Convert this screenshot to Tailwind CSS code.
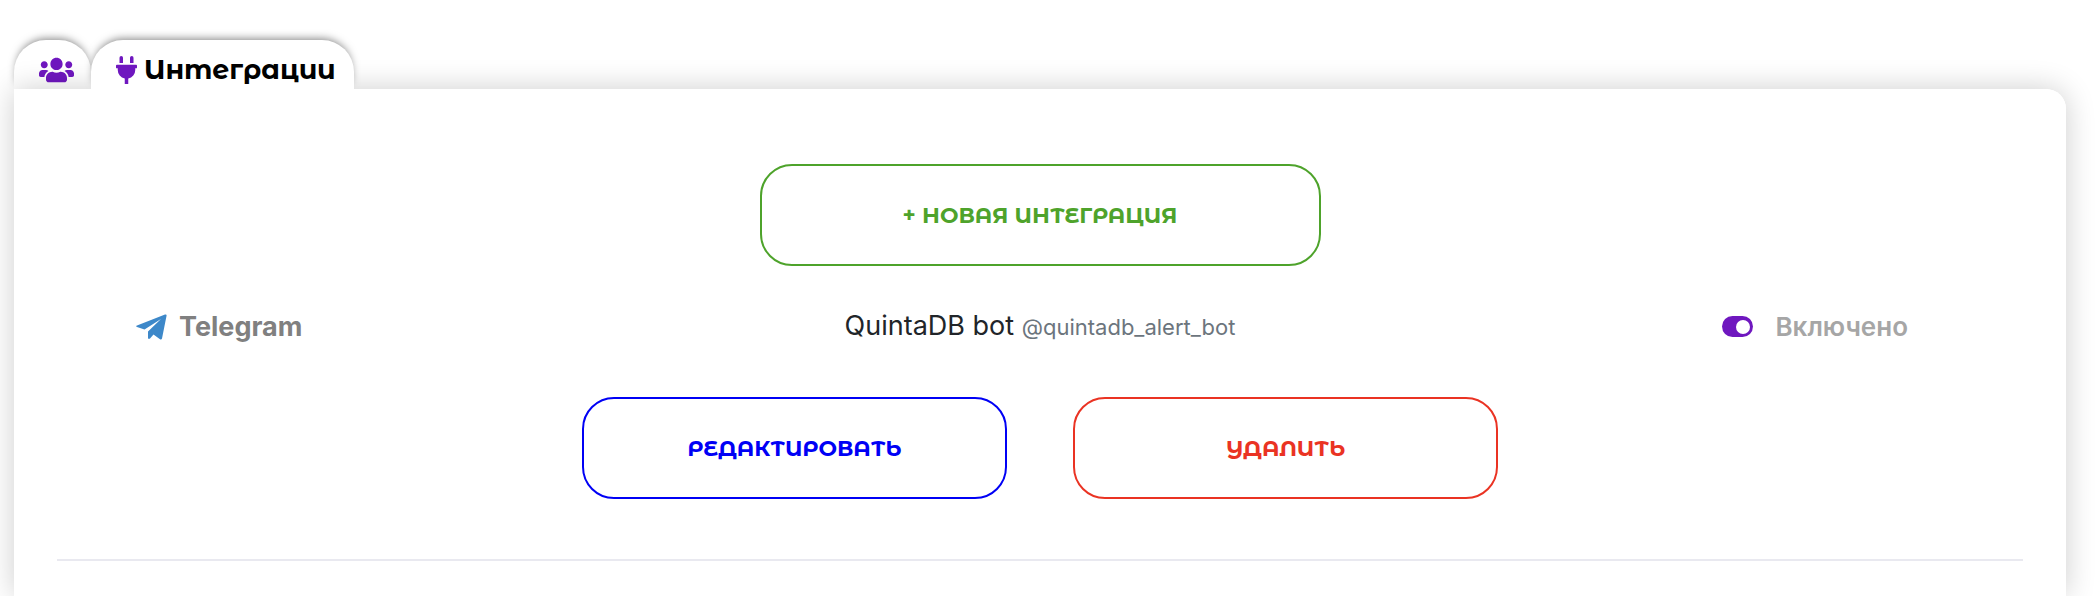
<!DOCTYPE html>
<html lang="ru">
<head>
  <meta charset="UTF-8" />
  <meta name="viewport" content="width=device-width, initial-scale=1.0" />
  <title>Интеграции</title>
  <script src="https://cdn.jsdelivr.net/npm/@tailwindcss/browser@4"></script>
</head>
<body class="bg-white font-['Inter','Liberation_Sans',sans-serif] text-[#212529]">

  <div class="min-h-screen flex flex-col pl-3.5 pr-8 pt-10 overflow-hidden">

    <nav class="flex h-[49px]">
      <a href="#users" aria-label="Пользователи" class="flex items-center justify-center w-[77px] rounded-t-[32px] bg-white text-[#6f17bf] pt-2.5 pl-2 shadow-[0_-4px_8px_-3px_rgba(0,0,0,0.5)]">
        <svg class="w-[35px] h-7" viewBox="0 0 640 512" fill="currentColor"><path d="M96 224c35.300 0 64-28.700 64-64s-28.700-64-64-64-64 28.700-64 64 28.700 64 64 64zm448 0c35.300 0 64-28.700 64-64s-28.700-64-64-64-64 28.700-64 64 28.700 64 64 64zm32 32h-64c-17.600 0-33.500 7.100-45.100 18.600 40.300 22.100 68.900 62 75.100 109.400h66c17.700 0 32-14.300 32-32v-32c0-35.300-28.700-64-64-64zm-256 0c61.900 0 112-50.100 112-112S381.900 32 320 32 208 82.100 208 144s50.100 112 112 112zm76.800 32h-8.300c-20.800 10-43.900 16-68.500 16s-47.600-6-68.500-16h-8.300C179.600 288 128 339.600 128 403.200V432c0 26.500 21.500 48 48 48h288c26.500 0 48-21.500 48-48v-28.800c0-63.600-51.600-115.200-115.200-115.200zm-223.700-13.400C161.500 263.100 145.600 256 128 256H64c-35.300 0-64 28.700-64 64v32c0 17.700 14.300 32 32 32h65.900c6.300-47.400 34.900-87.300 75.200-109.400z"/></svg>
      </a>
      <a href="#integrations" class="relative z-10 flex items-center gap-[7px] w-[263px] pl-[25px] pt-2.5 rounded-t-[32px] bg-white text-black font-['Montserrat_Alternates','Lato',sans-serif] text-[27px] leading-8 font-bold whitespace-nowrap shadow-[0_-4px_8px_-3px_rgba(0,0,0,0.5)]">
        <svg class="w-[21px] h-7 shrink-0 text-[#6f17bf]" viewBox="0 0 384 512" fill="currentColor"><path d="M320 32a32 32 0 0 0-64 0v96h64zm48 128H16a16 16 0 0 0-16 16v32a16 16 0 0 0 16 16h16v32a160.070 160.070 0 0 0 128 156.800V512h64v-99.200A160.070 160.070 0 0 0 352 256v-32h16a16 16 0 0 0 16-16v-32a16 16 0 0 0-16-16zM128 32a32 32 0 0 0-64 0v96h64z"/></svg>
        Интеграции
      </a>
    </nav>

    <main class="relative grow rounded-tr-[20px] shadow-[0_0_30px_rgba(0,0,0,0.2)]">
      <div class="relative z-20 h-full bg-white rounded-tr-[20px] px-[43px] pt-[75px]">

        <div class="flex justify-center">
          <button type="button" class="w-[561px] h-[102px] rounded-[32px] border-2 border-[#4ea32b] text-[#4ea32b] font-['Montserrat_Alternates','Lato',sans-serif] text-[22px] font-bold uppercase">+ Новая интеграция</button>
        </div>

        <div class="grid grid-cols-3 items-center mt-10 h-10 px-[79px] text-[27px] leading-10">
          <div class="flex items-center gap-3 font-bold text-[#808080]">
            <svg class="w-[31px] h-[26px]" viewBox="0 0 31 26" fill="#3d88c9"><path d="M1 11.500 29 .5Q31 0 30.500 2L26 24.500Q25.500 26 24 25.200L17.500 20.500 14 24.500Q12.500 25.500 12 24V17.500L25 5 8.500 15.500 1 13Q-.5 12.200 1 11.500Z"/></svg>
            Telegram
          </div>
          <div class="text-center whitespace-nowrap">QuintaDB bot <small class="text-[22px] text-[#6c757d]">@quintadb_alert_bot</small></div>
          <label class="flex items-center justify-end gap-[22px] pr-9 text-[26px] font-semibold text-[#a6a6a6]">
            <input type="checkbox" checked class="appearance-none flex items-center justify-end w-[31px] h-[21px] p-[3px] rounded-full bg-[#6f17bf] before:size-3.5 before:rounded-full before:bg-white" />
            Включено
          </label>
        </div>

        <div class="flex justify-center gap-[66px] mt-[51px]">
          <button type="button" class="w-[425px] h-[102px] rounded-[32px] border-2 border-[#0000f5] text-[#0000f5] font-['Montserrat_Alternates','Lato',sans-serif] text-[22px] font-bold uppercase">Редактировать</button>
          <button type="button" class="w-[425px] h-[102px] rounded-[32px] border-2 border-[#ea3323] text-[#ea3323] font-['Montserrat_Alternates','Lato',sans-serif] text-[22px] font-bold uppercase">Удалить</button>
        </div>

        <hr class="mt-15 border-t-2 border-[#e9e9f0]" />
      </div>
    </main>

  </div>

</body>
</html>
